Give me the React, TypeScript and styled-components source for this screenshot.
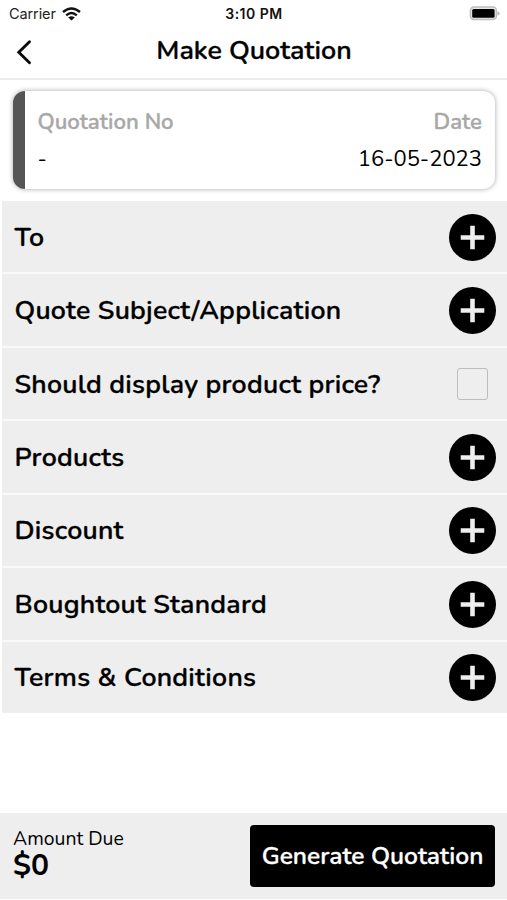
import React from "react";
import styled, { createGlobalStyle } from "styled-components";

const GlobalStyle = createGlobalStyle`
  * { box-sizing: border-box; }
  body { margin: 0; background: #fff; color: #0b0b0b; font-family: Nunito, "Noto Sans", sans-serif; }
`;

const Screen = styled.div`
  width: 507px;
  height: 900px;
  display: flex;
  flex-direction: column;
  background: #fff;
  overflow: hidden;
`;

const StatusBar = styled.header`
  height: 27px;
  flex: none;
  display: grid;
  grid-template-columns: 1fr auto 1fr;
  align-items: center;
  padding: 0 7px 0 9px;
  font: 400 14.5px/27px Inter, sans-serif;
  color: #222;
`;

const Carrier = styled.div`
  display: flex;
  align-items: center;
  gap: 6px;
  letter-spacing: -0.1px;
`;

const Clock = styled.div`
  font-weight: 600;
  font-size: 14px;
  letter-spacing: 0.5px;
  margin-right: 1px;
  color: #111;
`;

const BatterySlot = styled.div`
  display: flex;
  justify-content: flex-end;
`;

const TitleBar = styled.div`
  height: 53px;
  flex: none;
  display: grid;
  grid-template-columns: 48px 1fr 48px;
  align-items: center;
  border-bottom: 2px solid #ededed;
  padding-bottom: 3px;
`;

const BackButton = styled.button`
  height: 48px;
  padding: 1px 0 0 15px;
  border: 0;
  background: none;
  display: flex;
  align-items: center;
`;

const Label = styled.span<{ $size: number; $weight?: number; $line?: number; $track?: number; $color?: string }>`
  display: block;
  white-space: nowrap;
  font-size: ${(p) => p.$size}px;
  line-height: ${(p) => (p.$line ? `${p.$line}px` : 1.36)};
  font-weight: ${(p) => p.$weight ?? 600};
  letter-spacing: ${(p) => p.$track ?? 0}px;
  color: ${(p) => p.$color ?? "#000"};
  -webkit-text-stroke: ${(p) => (p.$weight ? 0 : 0.35)}px currentColor;
`;

const Title = styled.h1`
  margin: 0;
  padding: 0 0 1px 1px;
  text-align: center;
  line-height: 1;
`;

const Card = styled.section`
  flex: none;
  height: 98px;
  margin: 11px 12px 12px 13px;
  border-radius: 12px;
  border-left: 12.5px solid #555;
  background: #fff;
  box-shadow: 0 0 5px rgba(0, 0, 0, 0.36);
  display: flex;
  justify-content: space-between;
  padding: 17px 13px 0 12.5px;
`;

const Field = styled.div<{ $end?: boolean }>`
  display: flex;
  flex-direction: column;
  align-items: ${(p) => (p.$end ? "flex-end" : "flex-start")};
  gap: 8px;
`;

const Sections = styled.ul`
  flex: none;
  list-style: none;
  margin: 0 0 0 2px;
  padding: 0;
  height: 512px;
  display: grid;
  grid-auto-rows: 1fr;
  gap: 2px;
  background: #f9f9f9;
`;

const SectionRow = styled.li`
  background: #eee;
  display: flex;
  align-items: center;
  justify-content: space-between;
  padding: 1px 11px 0 12.5px;
`;

const AddButton = styled.button`
  width: 47px;
  height: 47px;
  padding: 0;
  border: 0;
  border-radius: 50%;
  background: #000;
  display: grid;
  place-items: center;
`;

const Checkbox = styled.span`
  width: 31px;
  height: 32px;
  margin-right: 8px;
  border: 1.5px solid #bdbdbd;
  border-radius: 3px;
`;

const Footer = styled.footer`
  flex: none;
  height: 86px;
  margin: auto 0 1px;
  background: #eee;
  display: flex;
  align-items: center;
  justify-content: space-between;
  padding: 0 12px 0 13px;
`;

const Amount = styled.div`
  display: flex;
  flex-direction: column;
  padding-bottom: 4px;
`;

const GenerateButton = styled.button`
  width: 245px;
  height: 62px;
  padding: 0;
  border: 0;
  border-radius: 4px;
  background: #000;
  font-family: inherit;
  text-align: center;
`;

const rows: { label: string; checkbox?: boolean }[] = [
  { label: "To" },
  { label: "Quote Subject/Application" },
  { label: "Should display product price?", checkbox: true },
  { label: "Products" },
  { label: "Discount" },
  { label: "Boughtout Standard" },
  { label: "Terms & Conditions" },
];

const Wifi = () => (
  <svg width="19" height="14" viewBox="0 0 19 14" fill="none" stroke="#111" strokeWidth="2.4">
    <path d="M1 5Q9.5-2.2 18 5M4.2 8.3Q9.5 3.9 14.8 8.3" />
    <path d="M9.5 13.6 6.2 10.5Q9.5 7.9 12.8 10.5Z" fill="#111" stroke="none" />
  </svg>
);

const Battery = () => (
  <svg width="31" height="15" viewBox="0 0 31 15">
    <rect x="1.4" y="1" width="26" height="12.6" rx="3.5" fill="#e8e8e8" stroke="#bdbdbd" strokeWidth="1.5" />
    <rect x="3.2" y="3" width="22.4" height="8.7" rx="1.5" fill="#000" />
    <path d="M28.5 5.2Q30.7 6 30.7 7.4T28.5 9.7Z" fill="#b8b8b8" />
  </svg>
);

const Chevron = () => (
  <svg width="18" height="26" viewBox="0 0 18 26" fill="none" stroke="#0b0b0b" strokeWidth="2.9">
    <path d="M14.5 2.8 3.8 13.3 14.5 23.8" strokeLinecap="round" />
  </svg>
);

const Plus = () => (
  <svg width="25" height="25" viewBox="0 0 25 25" stroke="#eee" strokeWidth="4.6">
    <path d="M12.5.7v23.6M.7 12.5h23.6" />
  </svg>
);

export default function App() {
  return (
    <Screen>
      <GlobalStyle />
      <StatusBar>
        <Carrier>
          Carrier <Wifi />
        </Carrier>
        <Clock>3:10 PM</Clock>
        <BatterySlot>
          <Battery />
        </BatterySlot>
      </StatusBar>
      <TitleBar>
        <BackButton aria-label="Back">
          <Chevron />
        </BackButton>
        <Title>
          <Label $size={26.9}>Make Quotation</Label>
        </Title>
      </TitleBar>
      <Card>
        <Field>
          <Label $size={22.2} $line={29} $color="#a8a8a8">Quotation No</Label>
          <Label $size={22} $weight={400}>-</Label>
        </Field>
        <Field $end>
          <Label $size={22.2} $line={29} $color="#a8a8a8">Date</Label>
          <Label $size={22} $weight={400}>16-05-2023</Label>
        </Field>
      </Card>
      <Sections>
        {rows.map((row) => (
          <SectionRow key={row.label}>
            <Label $size={26.7} $track={0.25} $line={37}>{row.label}</Label>
            {row.checkbox ? (
              <Checkbox role="checkbox" aria-checked={false} />
            ) : (
              <AddButton aria-label={`Add ${row.label}`}>
                <Plus />
              </AddButton>
            )}
          </SectionRow>
        ))}
      </Sections>
      <Footer>
        <Amount>
          <Label $size={19.4} $weight={400} $line={24}>Amount Due</Label>
          <Label $size={30} $weight={700} $line={30}>$0</Label>
        </Amount>
        <GenerateButton>
          <Label $size={24.6} $line={36} $color="#fff">Generate Quotation</Label>
        </GenerateButton>
      </Footer>
    </Screen>
  );
}
